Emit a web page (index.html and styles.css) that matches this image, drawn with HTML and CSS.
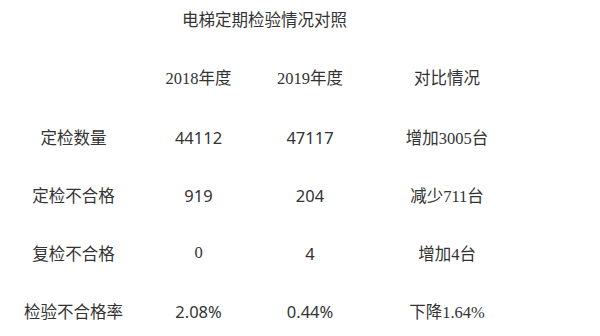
FILE: index.html
```html
<!DOCTYPE html>
<html lang="zh">
<head>
<meta charset="utf-8">
<link rel="stylesheet" href="styles.css">
</head>
<body>
<div class="page">
  <div class="title">电梯定期检验情况对照</div>
  <div class="grid">
    <div class="row head">
      <div class="cell"></div>
      <div class="cell serif">2018年度</div>
      <div class="cell serif">2019年度</div>
      <div class="cell">对比情况</div>
    </div>
    <div class="row">
      <div class="cell">定检数量</div>
      <div class="cell">44112</div>
      <div class="cell">47117</div>
      <div class="cell serif">增加3005台</div>
    </div>
    <div class="row">
      <div class="cell">定检不合格</div>
      <div class="cell">919</div>
      <div class="cell">204</div>
      <div class="cell serif">减少711台</div>
    </div>
    <div class="row">
      <div class="cell">复检不合格</div>
      <div class="cell serif">0</div>
      <div class="cell">4</div>
      <div class="cell serif">增加4台</div>
    </div>
    <div class="row">
      <div class="cell">检验不合格率</div>
      <div class="cell">2.08%</div>
      <div class="cell">0.44%</div>
      <div class="cell serif">下降1.64%</div>
    </div>
  </div>
</div>
</body>
</html>
```
FILE: styles.css
```css
html, body {
  margin: 0;
  padding: 0;
  background: #ffffff;
}
body {
  width: 600px;
  height: 336px;
  overflow: hidden;
  color: #333333;
  font-family: "Noto Sans", "Noto Sans CJK SC", sans-serif;
  font-size: 16px;
}
.page {
  width: 524px;
}
.title {
  height: 40px;
  line-height: 40px;
  text-align: center;
  font-size: 16.5px;
  padding-left: 5px;
}
.grid {
  margin-top: 6px;
  display: flex;
  flex-direction: column;
}
.row {
  display: grid;
  grid-template-columns: 147px 103px 120px 154px;
  height: 58px;
  align-items: center;
}
.row.head {
  height: 62px;
}
.cell {
  text-align: center;
  white-space: nowrap;
  font-size: 16.5px;
}
.serif {
  font-family: "Liberation Serif", "Noto Sans CJK SC", serif;
}
```
